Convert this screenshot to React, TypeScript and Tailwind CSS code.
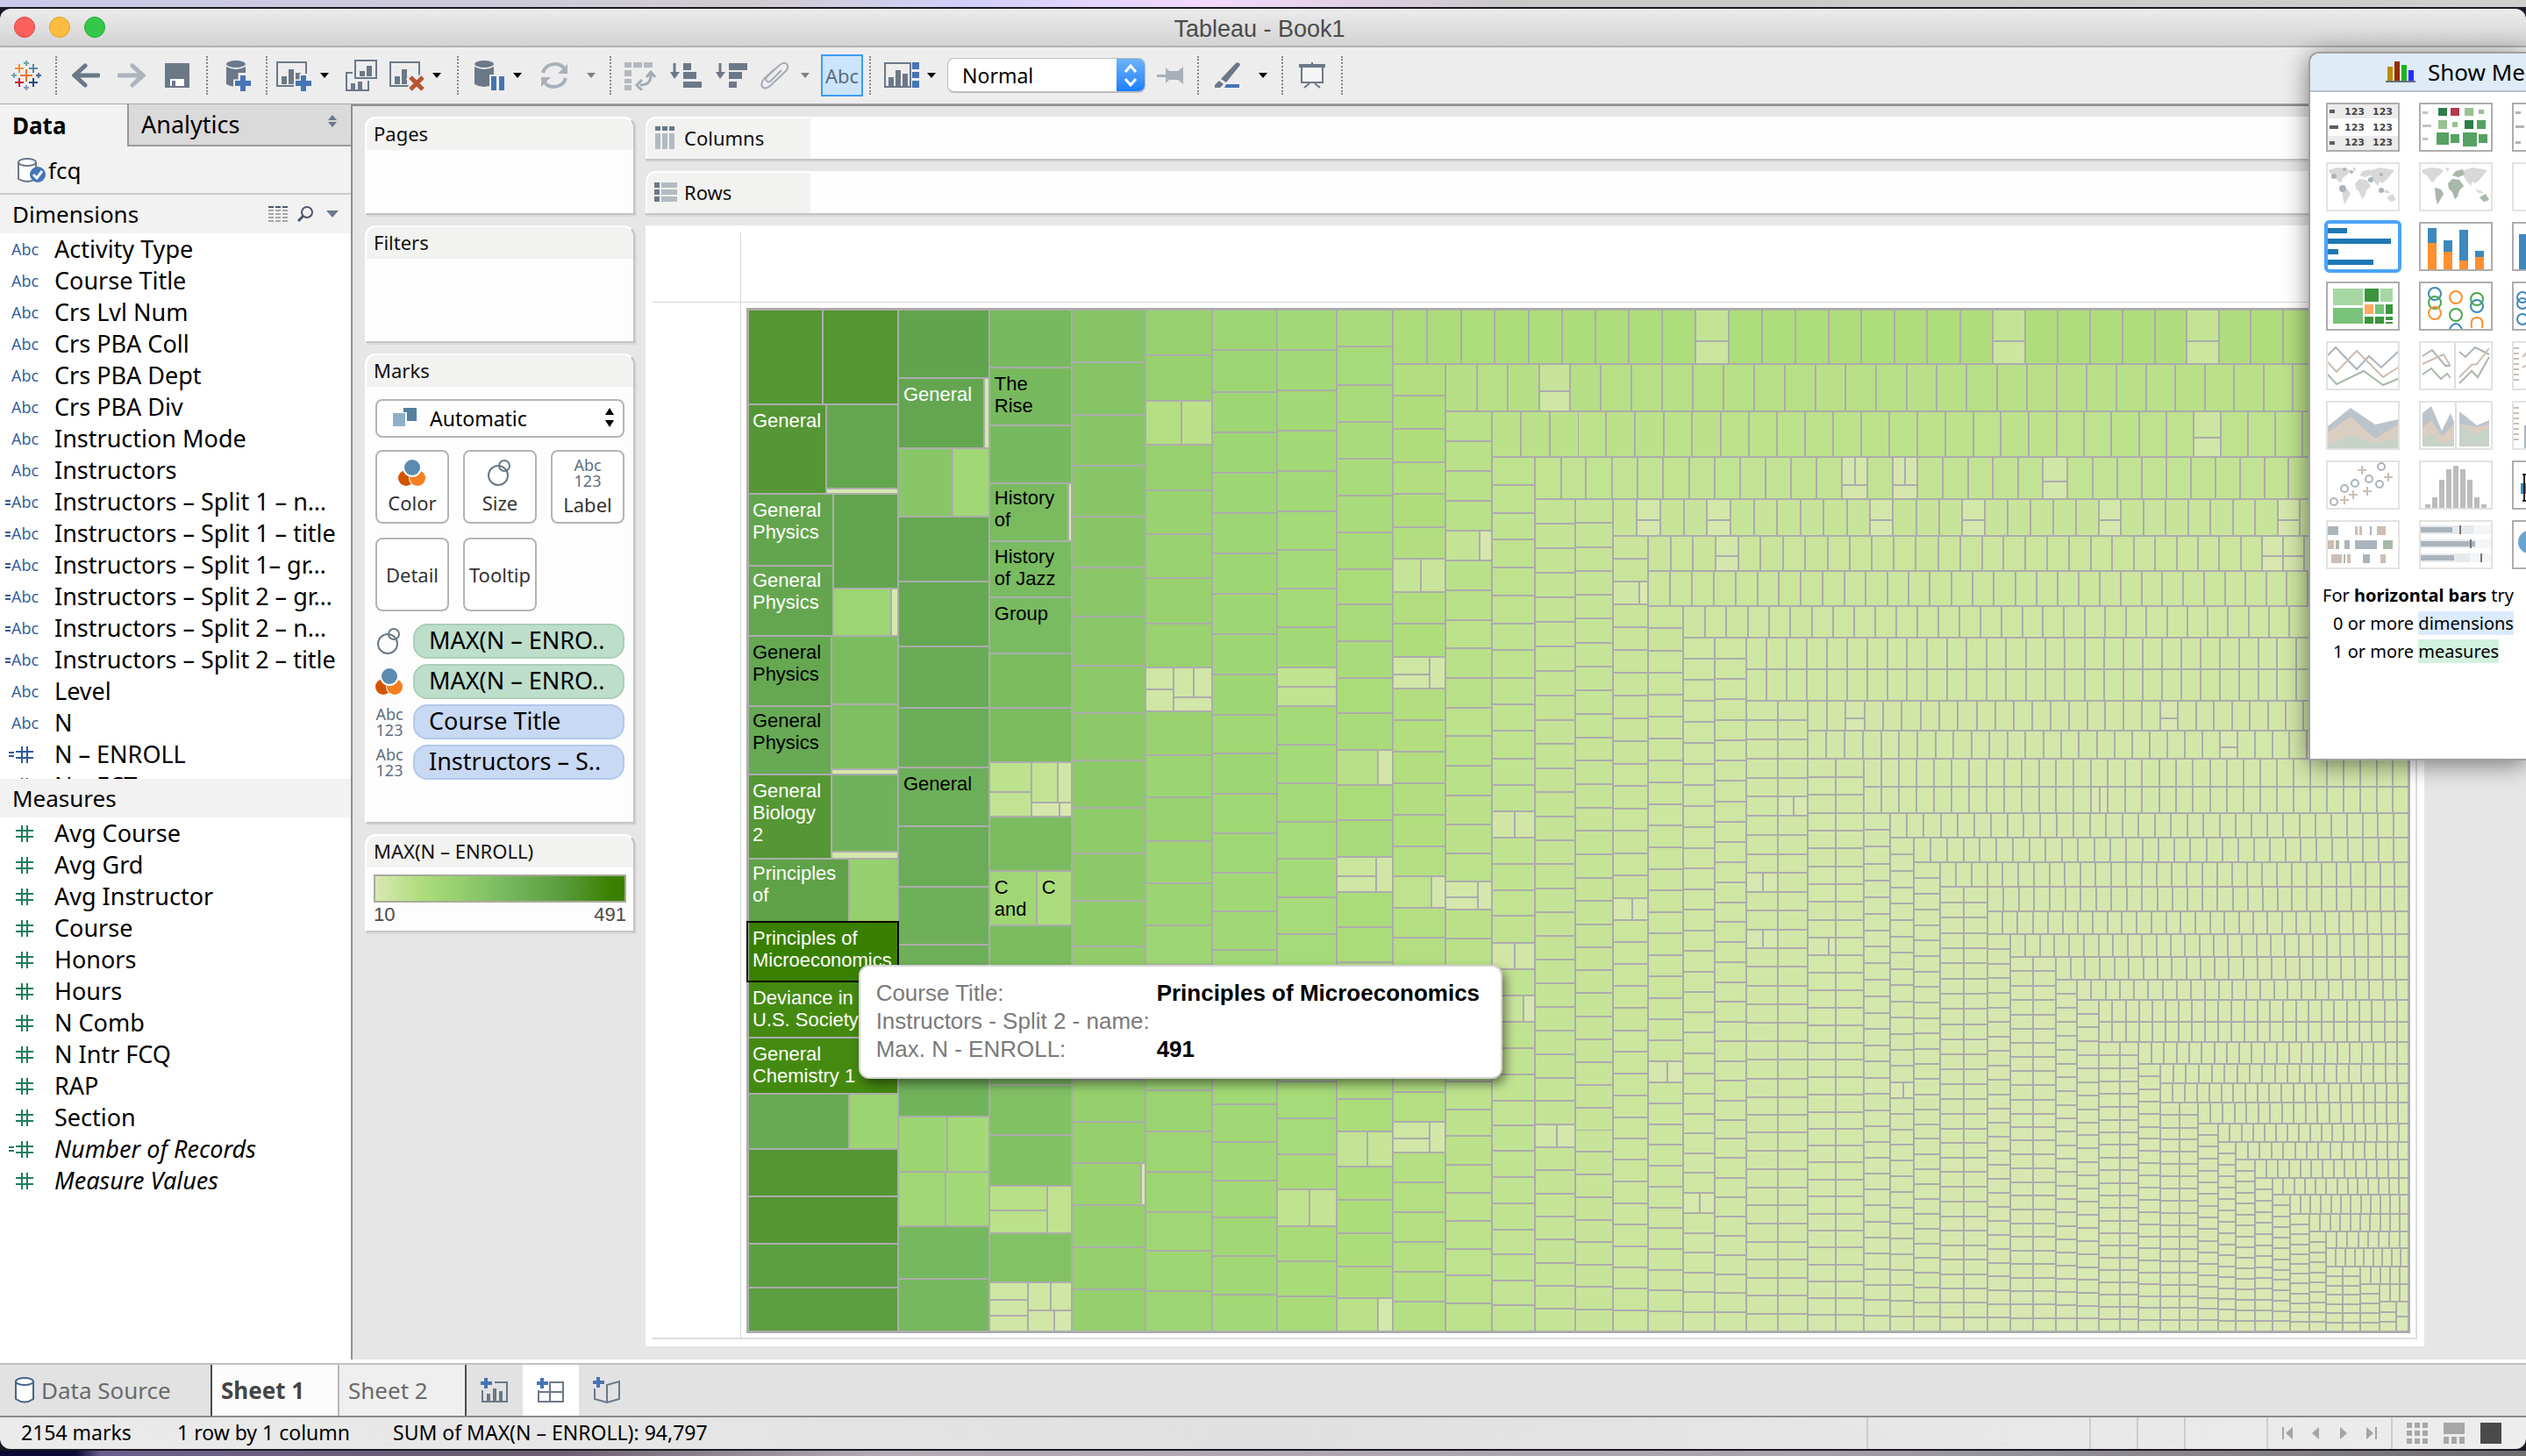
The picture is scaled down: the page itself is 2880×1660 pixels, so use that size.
import React from 'react';

const STEEL = '#6b7888';
const BLUE = '#4674b5';

/* ---------- colour scale ---------- */
const RAMP: [number, string][] = [
  [10, '#dae8b4'],
  [34, '#d0e6a4'],
  [46, '#c8e49a'],
  [69, '#bde28d'],
  [78, '#b8e087'],
  [96, '#afdd7c'],
  [131, '#a3d977'],
  [160, '#9ad26f'],
  [194, '#8cc868'],
  [260, '#77b95f'],
  [297, '#6bad58'],
  [340, '#62a44d'],
  [361, '#5c9f42'],
  [390, '#549632'],
  [462, '#458a10'],
  [491, '#3a8000'],
];

const channel = (hex: string, i: number) => parseInt(hex.slice(1 + i * 2, 3 + i * 2), 16);

function colorFor(value: number): string {
  if (value <= RAMP[0][0]) return RAMP[0][1];
  for (let i = 1; i < RAMP.length; i++) {
    const [v1, c1] = RAMP[i];
    if (value <= v1) {
      const [v0, c0] = RAMP[i - 1];
      const t = (value - v0) / (v1 - v0);
      const mix = [0, 1, 2].map((k) => Math.round(channel(c0, k) + (channel(c1, k) - channel(c0, k)) * t));
      return `rgb(${mix.join(',')})`;
    }
  }
  return RAMP[RAMP.length - 1][1];
}

/* ---------- treemap geometry ---------- */
type Cell = { x: number; y: number; w: number; h: number };
type Split = 'v' | 's' | 'w' | 'h' | 't' | 'q' | 'k';
type Strip = ['c' | 'r', number, number | number[], Record<number, Split>?];

const RIGHT = 2748;
const BOTTOM = 1520;

function divide(c: Cell, kind: Split): Cell[] {
  const { x, y, w, h } = c;
  const r = Math.round;
  if (kind === 'v' || kind === 's' || kind === 'w') {
    const a = kind === 's' ? w - 5 : r(w * (kind === 'v' ? 0.54 : 0.74));
    return [{ x, y, w: a, h }, { x: x + a, y, w: w - a, h }];
  }
  if (kind === 'h') {
    const a = r(h * 0.58);
    return [{ x, y, w, h: a }, { x, y: y + a, w, h: h - a }];
  }
  if (kind === 't') {
    const a = r(w * 0.7);
    const b = r(h * 0.55);
    return [
      { x, y, w: a, h: b },
      { x, y: y + b, w: a, h: h - b },
      { x: x + a, y, w: w - a, h },
    ];
  }
  if (kind === 'k') {
    const a = r(w * 0.5);
    const b = r(h * 0.66);
    return [
      { x, y, w: a, h: b },
      { x: x + a, y, w: w - a, h: b },
      { x, y: y + b, w, h: h - b },
    ];
  }
  const a = r(w * 0.42);
  const b = r(h * 0.5);
  const m = r(w * 0.3);
  const d = r(h * 0.68);
  return [
    { x, y, w: a, h: b },
    { x, y: y + b, w: a, h: h - b },
    { x: x + a, y, w: m, h: d },
    { x: x + a + m, y, w: w - a - m, h: d },
    { x: x + a, y: y + d, w: w - a, h: h - d },
  ];
}

/* Each strip is a column ('c', right edge) or a row ('r', bottom edge) followed by its cell count or its cuts */
const STRIPS: Strip[] = [
  ['c', 1306, [414, 474, 532, 590, 648, 704, 760, 814, 868, 922, 974, 1028, 1080, 1131, 1182, 1232, 1280, 1328, 1376, 1424, 1472], { 18: 's' }],
  ['c', 1382, [406, 458, 508, 560, 610, 660, 712, 762, 812, 862, 910, 960, 1008, 1056, 1101, 1149, 1196, 1244, 1292, 1338, 1384, 1428, 1474], { 2: 'v', 8: 'q' }],
  ['c', 1456, [400, 448, 494, 540, 586, 632, 678, 724, 770, 816, 860, 906, 951, 996, 1040, 1084, 1128, 1172, 1216, 1260, 1304, 1348, 1390, 1434, 1478]],
  ['c', 1524, [400, 446, 492, 538, 584, 628, 672, 716, 762, 784, 806, 850, 894, 938, 980, 1024, 1066, 1108, 1150, 1192, 1234, 1276, 1318, 1358, 1400, 1440, 1480], { 24: 'v' }],
  ['c', 1588, [396, 440, 482, 524, 566, 608, 650, 690, 732, 774, 814, 856, 896, 936, 978, 1018, 1058, 1098, 1137, 1176, 1215, 1254, 1292, 1332, 1370, 1408, 1446, 1482], { 12: 'w', 15: 't', 23: 'v', 28: 'w' }],
  ['r', 416, 31, { 9: 'h', 18: 'h', 24: 'h' }],
  ['c', 1648, [452, 490, 528, 564, 602, 638, 676, 712, 750, 786, 822, 858, 894, 930, 966, 1000, 1036, 1070, 1105, 1140, 1176, 1211, 1246, 1280, 1316, 1350, 1384, 1418, 1452, 1486], { 6: 'v', 9: 't', 16: 'w', 24: 't' }],
  ['r', 470, 32, { 3: 'h' }],
  ['c', 1701, [504, 538, 572, 606, 640, 674, 708, 740, 774, 808, 840, 874, 908, 941, 974, 1006, 1038, 1071, 1104, 1136, 1169, 1201, 1234, 1266, 1297, 1330, 1362, 1394, 1426, 1456, 1488], { 4: 'w', 16: 't' }],
  ['r', 522, 33, { 25: 'h' }],
  ['c', 1750, [554, 586, 616, 648, 680, 712, 742, 774, 804, 834, 866, 896, 926, 956, 986, 1016, 1045, 1076, 1106, 1136, 1166, 1196, 1226, 1256, 1284, 1314, 1344, 1374, 1404, 1432, 1462, 1490], { 13: 'v', 18: 'v', 20: 'w' }],
  ['r', 570, 35, { 12: 'k', 14: 'k', 20: 'h' }],
  ['c', 1796, 35, { 26: 'v' }],
  ['c', 1840, 36],
  ['r', 612, 35, { 1: 'h', 4: 'h', 11: 'h', 15: 'h', 21: 'h', 29: 'h' }],
  ['c', 1880, 36, { 2: 'w', 16: 'v' }],
  ['r', 652, 35, { 3: 'h', 28: 'h', 29: 'h' }],
  ['r', 692, 36],
  ['c', 1920, 34, { 21: 'v' }],
  ['r', 728, 35],
  ['c', 1956, 34, { 27: 'v' }],
  ['c', 1992, 35],
  ['r', 764, 34],
  ['r', 800, 34],
  ['c', 2028, 34, { 9: 'v', 12: 'v' }],
  ['c', 2062, 34, { 5: 'v' }],
  ['r', 834, 33, { 2: 'h', 19: 'h' }],
  ['r', 866, 34, { 23: 'h' }],
  ['c', 2094, 33, { 10: 'w' }],
  ['c', 2126, 33],
  ['r', 898, 32],
  ['r', 928, 32, { 13: 'v' }],
  ['c', 2156, 32],
  ['r', 956, 32],
  ['c', 2183, 31, { 15: 'v' }],
  ['r', 984, 31],
  ['c', 2213, 31],
  ['r', 1012, 31],
  ['c', 2240, 30],
  ['c', 2267, 30],
  ['r', 1040, 28],
  ['r', 1066, 29],
  ['c', 2293, 28],
  ['r', 1092, 28],
  ['c', 2319, 27],
  ['c', 2345, 27],
  ['r', 1118, 25],
  ['c', 2369, 26],
  ['r', 1141, 24],
  ['c', 2394, 25],
  ['r', 1166, 24],
  ['r', 1189, 24],
  ['c', 2418, 23],
  ['c', 2439, 23],
  ['r', 1214, 22],
  ['c', 2464, 22],
  ['r', 1236, 20],
  ['r', 1258, 21],
  ['c', 2486, 19],
  ['c', 2507, 19],
  ['r', 1282, 18],
  ['c', 2530, 18],
  ['r', 1304, 17],
  ['c', 2550, 17],
  ['r', 1324, 15],
  ['c', 2572, 16],
  ['r', 1345, 14],
  ['c', 2592, 14],
  ['r', 1364, 13],
  ['c', 2612, 13],
  ['r', 1386, 12],
  ['c', 2634, 12],
  ['r', 1406, 10],
  ['c', 2653, 10],
  ['r', 1425, 8],
  ['r', 1446, 9],
  ['c', 2672, 7],
  ['c', 2692, 7],
  ['r', 1466, 5],
  ['c', 2714, 5],
  ['r', 1486, 3],
  ['c', 2733, 3],
  ['c', 2748, 2],
];

/* left, top, right, bottom of the cells in the three widest columns */
const HEAD: number[][] = [
  [852, 354, 938, 462], [938, 354, 1024, 462],
  [852, 462, 942, 564], [942, 462, 1024, 558], [942, 558, 1024, 564],
  [852, 564, 950, 646], [852, 646, 950, 726], [950, 564, 1024, 672], [950, 672, 1016, 726], [1016, 672, 1024, 726],
  [852, 726, 948, 806], [852, 806, 948, 884], [948, 726, 1024, 804], [948, 804, 1024, 878], [948, 878, 1024, 884],
  [852, 884, 948, 980], [948, 884, 1024, 972], [948, 972, 1024, 980],
  [852, 980, 968, 1052], [968, 980, 1024, 1052],
  [852, 1052, 1024, 1120], [852, 1120, 1024, 1184], [852, 1184, 1024, 1248],
  [852, 1248, 968, 1312], [968, 1248, 1024, 1312],
  [852, 1312, 1024, 1366], [852, 1366, 1024, 1420], [852, 1420, 1024, 1470], [852, 1470, 1024, 1520],
  [1024, 354, 1128, 432], [1024, 432, 1122, 512], [1122, 432, 1128, 512],
  [1024, 512, 1086, 590], [1086, 512, 1128, 590],
  [1024, 590, 1128, 664], [1024, 664, 1128, 738], [1024, 738, 1128, 808], [1024, 808, 1128, 876],
  [1024, 876, 1128, 943], [1024, 943, 1128, 1012], [1024, 1012, 1128, 1078], [1024, 1078, 1128, 1144],
  [1024, 1144, 1128, 1210], [1024, 1210, 1128, 1274],
  [1024, 1274, 1080, 1338], [1080, 1274, 1128, 1338], [1024, 1338, 1078, 1400], [1078, 1338, 1128, 1400],
  [1024, 1400, 1128, 1460], [1024, 1460, 1128, 1520],
  [1128, 354, 1222, 420], [1128, 420, 1222, 486], [1128, 486, 1222, 552],
  [1128, 552, 1218, 618], [1218, 552, 1222, 618],
  [1128, 618, 1222, 682], [1128, 682, 1222, 746], [1128, 746, 1222, 808], [1128, 808, 1222, 870],
  [1128, 870, 1176, 904], [1128, 904, 1176, 932], [1176, 870, 1206, 916], [1206, 870, 1222, 916],
  [1176, 916, 1208, 932], [1208, 916, 1222, 932],
  [1128, 932, 1222, 994], [1128, 994, 1182, 1056], [1182, 994, 1222, 1056],
  [1128, 1056, 1222, 1118], [1128, 1118, 1222, 1178], [1128, 1178, 1222, 1238], [1128, 1238, 1222, 1296],
  [1128, 1296, 1222, 1354], [1128, 1354, 1194, 1382], [1128, 1382, 1194, 1408], [1194, 1354, 1222, 1408],
  [1128, 1408, 1222, 1464],
  [1128, 1464, 1172, 1484], [1128, 1484, 1172, 1502], [1128, 1502, 1172, 1520],
  [1172, 1464, 1198, 1496], [1198, 1464, 1222, 1496], [1172, 1496, 1202, 1520], [1202, 1496, 1222, 1520],
];

function buildCells(): Cell[] {
  const cells: Cell[] = HEAD.map(([x0, y0, x1, y1]) => ({ x: x0, y: y0, w: x1 - x0, h: y1 - y0 }));
  let x = 1222;
  let y = 354;
  for (const [dir, edge, parts, splits = {}] of STRIPS) {
    const start = dir === 'c' ? y : x;
    const end = dir === 'c' ? BOTTOM : RIGHT;
    let cuts: number[];
    if (typeof parts === 'number') {
      cuts = Array.from({ length: parts + 1 }, (_, i) => {
        const t = i / parts;
        return Math.round(start + (end - start) * (t * 1.04 - t * t * 0.04));
      });
    } else {
      cuts = [start, ...parts, end];
    }
    for (let i = 0; i < cuts.length - 1; i++) {
      const cell: Cell =
        dir === 'c'
          ? { x, y: cuts[i], w: edge - x, h: cuts[i + 1] - cuts[i] }
          : { x: cuts[i], y, w: cuts[i + 1] - cuts[i], h: edge - y };
      const kind = splits[i];
      if (kind) cells.push(...divide(cell, kind));
      else cells.push(cell);
    }
    if (dir === 'c') x = edge;
    else y = edge;
  }
  return cells;
}

const CELLS = buildCells();
const UNIT = 491 / (172 * 68);

const LABELS: [number, number, string, string[]][] = [
  [858, 488, '#fff', ['General']],
  [858, 590, '#fff', ['General', 'Physics']],
  [858, 670, '#fff', ['General', 'Physics']],
  [858, 752, '#000', ['General', 'Physics']],
  [858, 830, '#000', ['General', 'Physics']],
  [858, 910, '#fff', ['General', 'Biology', '2']],
  [858, 1004, '#fff', ['Principles', 'of']],
  [858, 1078, '#fff', ['Principles of', 'Microeconomics']],
  [858, 1146, '#fff', ['Deviance in', 'U.S. Society']],
  [858, 1210, '#fff', ['General', 'Chemistry 1']],
  [1030, 458, '#fff', ['General']],
  [1030, 902, '#000', ['General']],
  [1134, 446, '#000', ['The', 'Rise']],
  [1134, 576, '#000', ['History', 'of']],
  [1134, 643, '#000', ['History', 'of Jazz']],
  [1134, 708, '#000', ['Group']],
  [1134, 1020, '#000', ['C', 'and']],
  [1188, 1020, '#000', ['C']],
];

function Treemap() {
  return (
    <svg viewBox="845 346 1910 1181" className="block h-auto w-full" role="img" aria-label="Treemap of enrollment by course">
      <g stroke="#acacac" strokeWidth="2" shapeRendering="crispEdges">
        {CELLS.map((c, i) => (
          <rect key={i} x={c.x} y={c.y} width={c.w} height={c.h} fill={colorFor(c.w * c.h * UNIT)} />
        ))}
        <rect x="852" y="354" width="1896" height="1166" fill="none" strokeWidth="3" />
        <rect x="852" y="1052" width="172" height="68" fill="none" stroke="#000" />
      </g>
      <g fontFamily="'Liberation Sans', Arial, sans-serif" fontSize="22">
        {LABELS.map(([x, y, fill, lines]) => (
          <text key={`${x}-${y}`} fill={fill}>
            {lines.map((l, k) => (
              <tspan key={k} x={x} y={y + k * 25}>
                {l}
              </tspan>
            ))}
          </text>
        ))}
      </g>
    </svg>
  );
}

/* ---------- small icons ---------- */
function Icon({ w, h, children }: { w: number; h: number; children: React.ReactNode }) {
  return (
    <svg width={w} height={h} viewBox={`0 0 ${w} ${h}`} className="shrink-0" aria-hidden="true" fill="none">
      {children}
    </svg>
  );
}

function Plus({ x, y, r, c, s = 2 }: { x: number; y: number; r: number; c: string; s?: number }) {
  return <path d={`M${x - r} ${y}H${x + r}M${x} ${y - r}V${y + r}`} stroke={c} strokeWidth={s} />;
}

const Logo = () => (
  <Icon w={36} h={36}>
    <Plus x={18} y={18} r={7} c="#e8762d" />
    <Plus x={10} y={10} r={5} c="#ed9033" />
    <Plus x={26} y={10} r={5} c="#5b879b" />
    <Plus x={10} y={26} r={5} c="#c72035" />
    <Plus x={26} y={26} r={5} c="#1f4a80" />
    <Plus x={18} y={4} r={3} c="#74a0ab" />
    <Plus x={18} y={32} r={3} c="#8a97b8" />
    <Plus x={4} y={18} r={3} c="#74a0ab" />
    <Plus x={32} y={18} r={3} c="#5c6692" />
  </Icon>
);

const Arrow = ({ flip = false }: { flip?: boolean }) => (
  <Icon w={32} h={28}>
    {flip ? (
      <path d="M2 14H28M17 3L29 14L17 25" stroke="#adb4bc" strokeWidth="5" strokeLinecap="round" />
    ) : (
      <path d="M30 14H4M15 3L3 14L15 25" stroke={STEEL} strokeWidth="5" strokeLinecap="round" />
    )}
  </Icon>
);

const Save = () => (
  <Icon w={28} h={28}>
    <path d="M0 0H28V28H0Z" fill={STEEL} />
    <path d="M6 18H22V26H12V20H8V26H6Z" fill="#fff" />
  </Icon>
);

const Cylinder = () => (
  <>
    <path d="M0 8Q11 14 22 8V28Q11 34 0 28Z" fill={STEEL} />
    <ellipse cx="11" cy="5" rx="11" ry="4" fill={STEEL} />
  </>
);

const AddData = () => (
  <Icon w={32} h={36}>
    <Cylinder />
    <path d="M18 15V36M8 27H32" stroke="#ededed" strokeWidth="9" />
    <path d="M19 18V36M10 27H28" stroke={BLUE} strokeWidth="6" />
  </Icon>
);

const PauseData = () => (
  <Icon w={34} h={36}>
    <Cylinder />
    <path d="M17 17H34V36H17Z" fill="#ededed" />
    <path d="M19 19H25V35H19ZM28 19H34V35H28Z" fill={BLUE} />
  </Icon>
);

const NewSheet = () => (
  <Icon w={42} h={36}>
    <path d="M1 3H34V30H1Z" stroke={STEEL} strokeWidth="2" />
    <path d="M6 19H12V28H6ZM14 11H20V28H14ZM22 15H28V28H22Z" fill={STEEL} />
    <path d="M31 16V36M20 27H42" stroke="#ededed" strokeWidth="9" />
    <path d="M31 18V36M22 27H40" stroke={BLUE} strokeWidth="6" />
  </Icon>
);

const Duplicate = () => (
  <Icon w={36} h={36}>
    <path d="M8 15H1V35H26V24" stroke={STEEL} strokeWidth="2" />
    <path d="M11 1H35V21H11Z" stroke={STEEL} strokeWidth="2" />
    <path d="M16 13H22V19H16ZM24 7H30V19H24ZM6 27H11V34H6ZM14 25H19V34H14Z" fill={STEEL} />
  </Icon>
);

const ClearSheet = () => (
  <Icon w={40} h={36}>
    <path d="M1 3H34V30H1Z" stroke={STEEL} strokeWidth="2" />
    <path d="M6 19H12V28H6ZM14 11H20V28H14Z" fill={STEEL} />
    <path d="M22 19L39 36M39 19L22 36" stroke="#ededed" strokeWidth="9" />
    <path d="M24 20L38 34M38 20L24 34" stroke="#b85332" strokeWidth="5" />
  </Icon>
);

const Refresh = () => (
  <Icon w={32} h={30}>
    <path d="M3 12C5 5 11 2 17 2C22 2 25 4 27 7M29 18C27 25 21 28 15 28C10 28 7 26 5 23" stroke="#a9b0b9" strokeWidth="4" />
    <path d="M31 2V13H20ZM1 28V17H12Z" fill="#a9b0b9" />
  </Icon>
);

const Swap = () => (
  <Icon w={36} h={34}>
    <path d="M0 2H8V8H0ZM10 2H20V8H10ZM22 2H32V8H22ZM0 11H8V18H0ZM0 21H8V26H0ZM0 28H8V34H0Z" fill="#b3b8be" />
    <path d="M30 15Q31 28 18 28M25 19L30 13L35 19M20 22L14 28L20 34" stroke="#a3abb5" strokeWidth="3" />
  </Icon>
);

const Sort = ({ desc = false }: { desc?: boolean }) => (
  <Icon w={36} h={30}>
    <path d="M5 1V15" stroke={STEEL} strokeWidth="3" />
    <path d="M0 11H11L5 19Z" fill={STEEL} />
    {desc ? (
      <path d="M15 1H36V9H15ZM15 11H30V19H15ZM15 22H24V29H15Z" fill={STEEL} />
    ) : (
      <path d="M15 1H24V9H15ZM15 11H30V19H15ZM15 22H36V29H15Z" fill={STEEL} />
    )}
  </Icon>
);

const Clip = () => (
  <Icon w={34} h={32}>
    <path d="M24 10L12 22Q9 25 7 22Q5 20 8 17L22 4Q27 0 30 3Q33 6 29 11L12 27Q6 33 2 29Q0 25 4 20L17 8" stroke="#a4abb4" strokeWidth="2" />
  </Icon>
);

const Fit = () => (
  <Icon w={40} h={30}>
    <path d="M1 1H30V28H1Z" stroke={STEEL} strokeWidth="2" />
    <path d="M5 17H11V27H5ZM13 9H19V27H13ZM21 13H27V27H21Z" fill={STEEL} />
    <path d="M32 0H40V8H32ZM32 11H40V18H32ZM32 21H40V29H32Z" fill={BLUE} />
  </Icon>
);

const Pin = () => (
  <Icon w={30} h={20}>
    <path d="M0 9H10V1L14 5H24L30 0V20L24 15H14L10 19V12H0Z" fill="#a9b0b8" />
  </Icon>
);

const Pen = () => (
  <Icon w={30} h={30}>
    <path d="M24 1Q28 -1 29 3L13 23L7 19Z" fill={STEEL} />
    <path d="M5 21L10 25L6 29H0V26Z" fill={STEEL} />
    <path d="M13 25H28V29H11Z" fill={BLUE} />
  </Icon>
);

const Present = () => (
  <Icon w={30} h={30}>
    <path d="M15 0V3M3 5V23H27V5M12 24L6 29M18 24L24 29" stroke={STEEL} strokeWidth="2" />
    <path d="M0 2H30V6H0Z" fill={STEEL} />
    <path d="M4 7H26V22H4Z" fill="#f6f6f6" />
  </Icon>
);

const Caret = ({ dim = false }: { dim?: boolean }) => (
  <span className="flex w-5 shrink-0 justify-center">
    <Icon w={10} h={6}>
      <path d="M0 0H10L5 6Z" fill={dim ? '#808080' : '#000'} />
    </Icon>
  </span>
);

const Sep = () => (
  <span className="flex w-2 shrink-0 justify-center">
    <span className="h-11 border-l-2 border-dotted border-[#868686]" />
  </span>
);

function Tool({ label, width, children }: { label: string; width: string; children: React.ReactNode }) {
  return (
    <button type="button" aria-label={label} className={`flex h-12 shrink-0 items-center justify-center ${width}`}>
      {children}
    </button>
  );
}

function Toolbar() {
  return (
    <div className="flex h-16 items-center bg-[#ededed]" role="toolbar">
      <Tool label="Start page" width="w-[60px]"><Logo /></Tool>
      <Sep />
      <Tool label="Undo" width="w-[60px]"><Arrow /></Tool>
      <Tool label="Redo" width="w-11"><Arrow flip /></Tool>
      <Tool label="Save" width="w-[60px]"><Save /></Tool>
      <Sep />
      <Tool label="New data source" width="w-[60px] pl-2"><AddData /></Tool>
      <Sep />
      <Tool label="New worksheet" width="w-[52px] pl-1"><NewSheet /></Tool>
      <Caret />
      <Tool label="Duplicate sheet" width="w-[60px] pl-1"><Duplicate /></Tool>
      <Tool label="Clear sheet" width="w-12"><ClearSheet /></Tool>
      <Caret />
      <span className="w-2.5" />
      <Sep />
      <span className="w-2.5" />
      <Tool label="Pause updates" width="w-11"><PauseData /></Tool>
      <Caret />
      <Tool label="Refresh" width="w-16"><Refresh /></Tool>
      <Caret dim />
      <span className="w-2" />
      <Sep />
      <span className="w-1" />
      <Tool label="Swap rows and columns" width="w-[52px]"><Swap /></Tool>
      <Tool label="Sort ascending" width="w-[52px]"><Sort /></Tool>
      <Tool label="Sort descending" width="w-[52px]"><Sort desc /></Tool>
      <Tool label="Group members" width="w-12"><Clip /></Tool>
      <Caret dim />
      <span className="w-2" />
      <button type="button" aria-pressed="true" className="h-12 w-12 border-2 border-[#3b9cf7] bg-[#cbe5fe] text-[22px] leading-8 text-[#5f6d7e]">
        Abc
      </button>
      <span className="w-1" />
      <Sep />
      <span className="w-2" />
      <Tool label="Show cards" width="w-12"><Fit /></Tool>
      <Caret />
      <span className="w-2" />
      <label className="relative flex h-10 w-[226px] overflow-hidden rounded-lg border border-b-2 border-[#bdbdbd] bg-white">
        <span className="sr-only">Fit</span>
        <select className="h-full w-full appearance-none bg-transparent pl-4 text-[23px] leading-8 text-black">
          <option>Normal</option>
        </select>
        <span className="pointer-events-none absolute inset-y-0 right-0 flex w-8 items-center justify-center bg-gradient-to-b from-[#6cb3fa] to-[#157efb]">
          <Icon w={16} h={26}>
            <path d="M2 9L8 2L14 9M2 17L8 24L14 17" stroke="#fff" strokeWidth="3" />
          </Icon>
        </span>
      </label>
      <Tool label="Fix axes" width="w-14"><Pin /></Tool>
      <Sep />
      <Tool label="Highlight" width="w-[60px]"><Pen /></Tool>
      <Caret />
      <span className="w-2" />
      <Sep />
      <Tool label="Presentation mode" width="w-[60px]"><Present /></Tool>
      <Sep />
    </div>
  );
}

/* ---------- data pane ---------- */
const DIMENSIONS: [string, string][] = [
  ['Abc', 'Activity Type'],
  ['Abc', 'Course Title'],
  ['Abc', 'Crs Lvl Num'],
  ['Abc', 'Crs PBA Coll'],
  ['Abc', 'Crs PBA Dept'],
  ['Abc', 'Crs PBA Div'],
  ['Abc', 'Instruction Mode'],
  ['Abc', 'Instructors'],
  ['=Abc', 'Instructors – Split 1 – n…'],
  ['=Abc', 'Instructors – Split 1 – title'],
  ['=Abc', 'Instructors – Split 1– gr…'],
  ['=Abc', 'Instructors – Split 2 – gr…'],
  ['=Abc', 'Instructors – Split 2 – n…'],
  ['=Abc', 'Instructors – Split 2 – title'],
  ['Abc', 'Level'],
  ['Abc', 'N'],
  ['=#', 'N – ENROLL'],
  ['=#', 'N – FCT'],
];

const MEASURES: [string, string][] = [
  ['#', 'Avg Course'],
  ['#', 'Avg Grd'],
  ['#', 'Avg Instructor'],
  ['#', 'Course'],
  ['#', 'Honors'],
  ['#', 'Hours'],
  ['#', 'N Comb'],
  ['#', 'N Intr FCQ'],
  ['#', 'RAP'],
  ['#', 'Section'],
  ['=#', 'Number of Records'],
  ['#', 'Measure Values'],
];

function FieldIcon({ kind, color }: { kind: string; color: string }) {
  const calc = kind.startsWith('=');
  return (
    <svg width="48" height="24" viewBox="0 0 48 24" className="shrink-0" aria-hidden="true">
      {calc && <path d={kind === '=#' ? 'M10 10H16M10 14H16' : 'M6 11H12M6 15H12'} stroke={color} strokeWidth="2" />}
      {kind.endsWith('#') ? (
        <path d="M18 9H38M18 16H38M25 3V22M31 3V22" stroke={color} strokeWidth="2" />
      ) : (
        <text x="13" y="19" fontSize="18" fill={color} fontFamily="'Open Sans', sans-serif">
          Abc
        </text>
      )}
    </svg>
  );
}

function FieldList({ items, color }: { items: [string, string][]; color: string }) {
  return (
    <ul>
      {items.map(([kind, name], i) => (
        <li key={name} className="flex h-9 items-center">
          <FieldIcon kind={kind} color={color} />
          <span
            className={`pl-3.5 text-[27px] leading-9 whitespace-nowrap ${color === '#1f7d5a' && i > 9 ? 'italic' : ''}`}
          >
            {name}
          </span>
        </li>
      ))}
    </ul>
  );
}

function DataPane() {
  return (
    <aside className="flex w-[400px] shrink-0 flex-col bg-white">
      <div className="flex h-12 bg-[#f2f2f2]">
        <button type="button" className="w-[147px] border-r-2 border-[#9a9a9a] pl-3.5 text-left text-[26px] leading-9 font-bold">
          Data
        </button>
        <button
          type="button"
          className="flex flex-1 items-center justify-between border-b-2 border-[#9a9a9a] bg-[#dadada] pr-4 pl-3.5 text-[27px] leading-9"
        >
          Analytics
          <span className="pb-2">
            <Icon w={10} h={14}>
              <path d="M0 6L5 0L10 6ZM0 8H10L5 14Z" fill={STEEL} />
            </Icon>
          </span>
        </button>
      </div>
      <div className="flex h-[55px] items-center gap-0.5 border-b-2 border-[#cbcbcb] bg-[#f2f2f2] pl-5">
        <Icon w={33} h={28}>
          <path d="M1 5V24Q11 30 21 24V5" fill="#fff" stroke={STEEL} strokeWidth="2" />
          <ellipse cx="11" cy="5" rx="10" ry="4" fill="#fff" stroke={STEEL} strokeWidth="2" />
          <circle cx="23" cy="19" r="9" fill={BLUE} />
          <path d="M18 19L22 23L28 15" stroke="#fff" strokeWidth="3" />
        </Icon>
        <span className="text-[26px] leading-9">fcq</span>
      </div>
      <div className="flex h-11 items-center bg-[#f2f2f2] pr-3.5 pl-3.5">
        <h2 className="flex-1 text-[26px] leading-9">Dimensions</h2>
        <Icon w={24} h={18}>
          <path d="M0 1H24" stroke="#4b5766" strokeWidth="2" strokeDasharray="6 2" />
          <path d="M0 5H24M0 9H24M0 13H24M0 17H24" stroke="#a6a6a6" strokeWidth="2" strokeDasharray="6 2" />
        </Icon>
        <span className="pl-2">
          <Icon w={20} h={18}>
            <circle cx="12" cy="7" r="6" stroke="#4b5766" strokeWidth="2" />
            <path d="M8 11L2 17" stroke="#4b5766" strokeWidth="3" />
          </Icon>
        </span>
        <span className="pl-3.5">
          <Icon w={14} h={8}>
            <path d="M0 0H14L7 8Z" fill={STEEL} />
          </Icon>
        </span>
      </div>
      <div className="h-[622px] overflow-hidden">
        <FieldList items={DIMENSIONS} color="#2f5a9c" />
      </div>
      <h2 className="h-11 bg-[#f2f2f2] pl-3.5 text-[26px] leading-11">Measures</h2>
      <FieldList items={MEASURES} color="#1f7d5a" />
    </aside>
  );
}

/* ---------- cards ---------- */
function Card({ title, body, children }: { title: string; body: string; children?: React.ReactNode }) {
  return (
    <section className="rounded-t-xl border-2 border-t-white border-r-[#c4c4c4] border-b-[#c4c4c4] border-l-white bg-[#fdfdfd] shadow-[2px_2px_0_#dadada]">
      <h3 className="rounded-t-xl bg-[#f2f2f0] pb-0.5 pl-2 text-[22px] leading-[34px] text-[#111]">{title}</h3>
      <div className={body}>{children}</div>
    </section>
  );
}

const ColorIcon = () => (
  <Icon w={32} h={32}>
    <circle cx="9" cy="22" r="9" fill="#d35400" />
    <circle cx="22" cy="22" r="10" fill="#fdfdfd" />
    <circle cx="22" cy="22" r="9" fill="#f57f20" />
    <circle cx="16" cy="10" r="11" fill="#fdfdfd" />
    <circle cx="16" cy="10" r="9" fill="#5c8ab0" />
  </Icon>
);

const SizeIcon = () => (
  <Icon w={32} h={32}>
    <circle cx="14" cy="19" r="11" stroke={STEEL} strokeWidth="2" />
    <circle cx="21" cy="8" r="6" stroke={STEEL} strokeWidth="2" />
  </Icon>
);

const LabelIcon = () => (
  <span className="flex w-8 shrink-0 flex-col items-center text-[18px] leading-[18px] text-[#5f6d7e]">
    <span>Abc</span>
    <span>123</span>
  </span>
);

function MarkButton({ label, icon }: { label: string; icon?: React.ReactNode }) {
  return (
    <button
      type="button"
      className="flex h-[84px] w-[84px] flex-col items-center justify-center gap-1 rounded-lg border-2 border-[#b4b4b4] bg-white text-[22px] leading-7 text-[#333]"
    >
      {icon}
      {label}
    </button>
  );
}

function Pill({ icon, text, tone }: { icon: React.ReactNode; text: string; tone: string }) {
  return (
    <div className="flex items-center justify-between">
      <span className="flex w-8 justify-center">{icon}</span>
      <button
        type="button"
        className={`h-10 w-[241px] rounded-2xl border-2 pb-0.5 pl-4 text-left text-[27px] leading-[34px] whitespace-nowrap text-black ${tone}`}
      >
        {text}
      </button>
    </div>
  );
}

function Cards() {
  const green = 'border-[#a9cfb8] bg-[#bddecb]';
  const blue = 'border-[#b3c8ea] bg-[#c8d9f4]';
  return (
    <div className="flex w-[308px] shrink-0 flex-col gap-3">
      <Card title="Pages" body="h-[72px]" />
      <Card title="Filters" body="h-[94px]" />
      <Card title="Marks" body="flex h-[496px] flex-col gap-3.5 px-2.5 pt-3.5">
        <label className="relative block h-11">
          <span className="sr-only">Mark type</span>
          <select className="h-11 w-full appearance-none rounded-lg border-2 border-[#b4b4b4] bg-white pl-[60px] text-[23px] leading-8 text-black">
            <option>Automatic</option>
          </select>
          <span className="pointer-events-none absolute top-2.5 left-5">
            <Icon w={28} h={22}>
              <path d="M12 0H27V15H12Z" fill="#537f9f" />
              <path d="M0 5H16V22H0Z" fill="#fff" />
              <path d="M0 6H14V21H0Z" fill="#8fb0c9" />
            </Icon>
          </span>
          <span className="pointer-events-none absolute top-2.5 right-3">
            <Icon w={10} h={22}>
              <path d="M0 8L5 0L10 8ZM0 14H10L5 22Z" fill="#000" />
            </Icon>
          </span>
        </label>
        <div className="grid grid-cols-3 justify-between gap-4">
          <MarkButton label="Color" icon={<ColorIcon />} />
          <MarkButton label="Size" icon={<SizeIcon />} />
          <MarkButton label="Label" icon={<LabelIcon />} />
          <MarkButton label="Detail" />
          <MarkButton label="Tooltip" />
        </div>
        <div className="flex flex-col gap-1.5">
          <Pill icon={<SizeIcon />} text="MAX(N – ENRO.." tone={green} />
          <Pill icon={<ColorIcon />} text="MAX(N – ENRO.." tone={green} />
          <Pill icon={<LabelIcon />} text="Course Title" tone={blue} />
          <Pill icon={<LabelIcon />} text="Instructors – S.." tone={blue} />
        </div>
      </Card>
      <Card title="MAX(N – ENROLL)" body="h-[72px] px-2 pt-2">
        <div className="h-8 border-2 border-[#a9a99b] bg-[linear-gradient(to_right,#dae8b4,#afdd7c_18%,#9ad26f_31%,#77b95f_52%,#5c9f42_73%,#3a8000_95%)]" />
        <div className="flex justify-between font-['Liberation_Sans',sans-serif] text-[22px] leading-7 text-[#4a4a4a]">
          <span>10</span>
          <span>491</span>
        </div>
      </Card>
    </div>
  );
}

function Shelf({ title, icon }: { title: string; icon: React.ReactNode }) {
  return (
    <section className="flex h-[50px] rounded-tl-xl border-b-2 border-[#c4c4c4] bg-[#fdfdfd] shadow-[0_2px_0_#dadada]">
      <h3 className="flex w-[188px] items-center gap-2 rounded-tl-xl border-t-2 border-l-2 border-white bg-[#f2f2f0] pb-0.5 pl-2 text-[22px] leading-8 text-[#111]">
        {icon}
        {title}
      </h3>
    </section>
  );
}

function Worksheet() {
  return (
    <div className="flex min-w-0 flex-1 flex-col gap-3">
      <Shelf
        title="Columns"
        icon={
          <Icon w={26} h={26}>
            <path d="M1 0H7V5H1ZM9 0H15V5H9ZM17 0H23V5H17Z" fill={STEEL} />
            <path d="M1 8H7V26H1ZM9 8H15V26H9ZM17 8H23V26H17Z" fill="#b3bac1" />
          </Icon>
        }
      />
      <Shelf
        title="Rows"
        icon={
          <Icon w={26} h={22}>
            <path d="M0 0H6V6H0ZM0 8H6V14H0ZM0 16H6V22H0Z" fill={STEEL} />
            <path d="M8 0H26V6H8ZM8 8H26V14H8ZM8 16H26V22H8Z" fill="#b3bac1" />
          </Icon>
        }
      />
      <div className="mr-[116px] bg-white p-2">
        <div className="grid grid-cols-[101px_minmax(0,1fr)] border-r-2 border-b-2 border-[#dcdcdc]">
          <div className="h-20 border-r border-b border-[#d6d6d6]" />
          <div className="h-20 border-b border-[#d6d6d6]" />
          <div className="border-r border-[#d6d6d6]" />
          <div className="relative">
            <Treemap />
            <div
              role="tooltip"
              className="absolute top-[64%] left-[7%] grid grid-cols-[320px_auto] rounded-xl border-2 border-[#d4d4d4] bg-white pt-3.5 pr-6 pb-4 pl-[18px] font-['Liberation_Sans',sans-serif] text-[26px] leading-8 text-[#7a7a7a] shadow-[4px_6px_12px_rgba(0,0,0,0.45)]"
            >
              <span>Course Title:</span>
              <span className="font-bold text-black">Principles of Microeconomics</span>
              <span>Instructors - Split 2 - name:</span>
              <span />
              <span>Max. N - ENROLL:</span>
              <span className="font-bold text-black">491</span>
            </div>
          </div>
        </div>
      </div>
    </div>
  );
}

/* ---------- show me ---------- */
const G = '#aab4bd';
const T = '#cdbdb2';
const S = '#a9b8aa';

const land =
  'M3 9L12 6L24 7L28 10L23 15L19 18L17 23L14 22L10 16L4 12ZM18 29L25 31L28 36L24 43L21 48L19 40ZM30 6L35 7L32 11ZM33 24L38 19L46 20L51 27L46 32L44 39L41 42L38 34L34 30ZM38 15L42 10L50 8L52 14L45 17ZM51 9L62 6L78 9L74 14L68 21L64 24L61 22L59 27L54 21L51 16ZM64 31L70 32L74 35L68 35ZM69 40L76 36L80 43L74 45Z';

const THUMBS: { name: string; on: boolean; art: React.ReactNode }[] = [
  {
    name: 'Text table',
    on: true,
    art: (
      <>
        <path d="M2 2H82V18H2ZM2 38H82V54H2Z" fill="#ebebeb" />
        <path d="M4 8H10V12H4ZM4 26H14V30H4ZM4 44H10V48H4Z" fill="#5f5f5f" />
        <g fontSize="11" fontWeight="700" fill="#444" fontFamily="'DejaVu Sans', sans-serif">
          {[14, 32, 49].map((y) => (
            <React.Fragment key={y}>
              <text x="21" y={y}>123</text>
              <text x="53" y={y}>123</text>
            </React.Fragment>
          ))}
        </g>
      </>
    ),
  },
  {
    name: 'Heat map',
    on: true,
    art: (
      <>
        <path d="M4 10H10V13H4ZM4 25H14V28H4ZM4 40H10V43H4Z" fill="#c4c4c4" />
        <path d="M22 6H32V15H22ZM52 20H62V30H52Z" fill="#2e7d4a" />
        <path d="M36 6H46V15H36Z" fill="#b03a50" />
        <path d="M52 6H62V15H52ZM68 8H74V13H68ZM22 20H32V30H22ZM38 22H44V28H38Z" fill="#98c090" />
        <path d="M66 20H76V30H66ZM20 34H34V48H20ZM36 36H46V46H36ZM50 34H66V50H50ZM68 36H78V46H68Z" fill="#55a264" />
      </>
    ),
  },
  { name: 'Highlight table', on: true, art: <path d="M4 10H10V13H4ZM4 26H14V29H4ZM4 44H10V47H4Z" fill="#b4b4b4" /> },
  {
    name: 'Symbol map',
    on: false,
    art: (
      <>
        <path d={land} fill="#d8d8d8" />
        <g fill={G}>
          <circle cx="9" cy="16" r="3" /><circle cx="19" cy="30" r="4" /><circle cx="29" cy="11" r="2" />
          <circle cx="51" cy="20" r="3" /><circle cx="63" cy="32" r="3" /><circle cx="63" cy="14" r="2" /><circle cx="21" cy="8" r="2" />
        </g>
      </>
    ),
  },
  {
    name: 'Filled map',
    on: false,
    art: (
      <>
        <path d={land} fill="#d8d8d8" />
        <path d="M18 29L25 31L28 36L24 43L21 48L19 40ZM33 24L38 19L46 20L51 27L46 32L44 39L41 42L38 34L34 30ZM38 15L42 10L50 8L52 14L45 17ZM69 40L76 36L80 43L74 45Z" fill={S} />
      </>
    ),
  },
  { name: 'Pie chart', on: false, art: null },
  { name: 'Horizontal bars', on: true, art: <path d="M2 7H24V13H2ZM2 19H74V25H2ZM2 31H14V37H2ZM2 43H54V49H2Z" fill="#1f77b4" /> },
  {
    name: 'Stacked bars',
    on: true,
    art: (
      <>
        <path d="M10 7H20V24H10ZM28 21H38V34H28ZM46 9H56V44H46ZM64 33H74V40H64Z" fill="#3d88bd" />
        <path d="M10 24H20V54H10ZM28 34H38V54H28ZM46 44H56V54H46ZM64 40H74V54H64Z" fill="#ff9030" />
      </>
    ),
  },
  { name: 'Side-by-side bars', on: true, art: <path d="M8 14H20V54H8Z" fill="#3d88bd" /> },
  {
    name: 'Treemap',
    on: true,
    art: (
      <>
        <path d="M8 8H42V27H8ZM62 8H76V23H62Z" fill="#a6d7a4" />
        <path d="M8 30H42V48H8ZM56 26H66V37H56Z" fill="#78c27a" />
        <path d="M44 8H60V23H44ZM68 26H76V37H68ZM44 40H54V48H44ZM56 40H66V48H56ZM68 40H76V44H68ZM68 46H76V48H68Z" fill="#3b953c" />
        <path d="M44 26H54V37H44Z" fill="#ffac60" />
      </>
    ),
  },
  {
    name: 'Circle views',
    on: true,
    art: (
      <g fill="none" strokeWidth="2">
        <g stroke="#3d88bd"><circle cx="18" cy="14" r="7" /><circle cx="66" cy="28" r="7" /><path d="M35 54Q42 42 49 54" /></g>
        <g stroke="#47a84a"><circle cx="18" cy="24" r="7" /><circle cx="42" cy="38" r="7" /><circle cx="66" cy="20" r="7" /></g>
        <g stroke="#ff9030"><circle cx="18" cy="36" r="7" /><circle cx="42" cy="18" r="7" /><path d="M60 53Q58 41 66 41Q74 41 72 53" /></g>
      </g>
    ),
  },
  {
    name: 'Side-by-side circles',
    on: true,
    art: <g fill="none" stroke="#3d88bd" strokeWidth="2"><circle cx="12" cy="18" r="6" /><circle cx="12" cy="25" r="6" /><circle cx="12" cy="43" r="6" /></g>,
  },
  {
    name: 'Lines',
    on: false,
    art: (
      <g fill="none" strokeWidth="2">
        <path d="M2 16L11 7L35 32L49 17L63 30L82 12" stroke={G} />
        <path d="M2 24L12 35L35 11L65 41L82 30" stroke={T} />
        <path d="M2 38L12 49L43 34L65 50L82 43" stroke={S} />
      </g>
    ),
  },
  {
    name: 'Lines with panes',
    on: false,
    art: (
      <g fill="none" strokeWidth="2">
        <path d="M41 2V54" stroke="#dedede" />
        <path d="M4 17L15 10L30 28L36 28M46 12L53 18L64 7L80 15" stroke={G} />
        <path d="M4 26L28 15L35 27M46 41L60 27L66 26L80 8" stroke={T} />
        <path d="M4 38L14 31L25 43L32 37L36 42M46 48L60 34L67 41L80 18" stroke={S} />
      </g>
    ),
  },
  { name: 'Dual lines', on: false, art: <path d="M2 8H8M2 14H8M2 20H8M2 26H8M2 32H8M2 38H8M2 44H8M12 18L20 10M12 30L20 26" stroke={T} strokeWidth="2" /> },
  {
    name: 'Area',
    on: false,
    art: (
      <>
        <path d="M2 29L28 8L56 27L82 21V54H2Z" fill="#bcc4cb" />
        <path d="M2 36L28 18L56 43L82 27V54H2Z" fill="#dacec3" />
        <path d="M2 51L28 39L56 48L82 43V54H2Z" fill="#c7d2c8" />
      </>
    ),
  },
  {
    name: 'Area with panes',
    on: false,
    art: (
      <>
        <path d="M42 2V54" stroke="#dedede" strokeWidth="2" />
        <path d="M4 14L14 6L26 34L36 14L40 24V52H4ZM46 12L66 28L80 22V52H46Z" fill="#bcc4cb" />
        <path d="M4 30L14 22L26 41L40 26V52H4ZM46 26L66 30L80 27V52H46Z" fill="#dacec3" />
        <path d="M4 44L14 36L26 50L40 44V52H4ZM46 28L66 38L80 30V52H46Z" fill="#c7d2c8" />
      </>
    ),
  },
  { name: 'Dual combination', on: false, art: <><path d="M2 8H8M2 14H8M2 20H8M2 26H8M2 32H8M2 38H8M2 44H8" stroke={T} strokeWidth="2" /><path d="M14 28H22V54H14Z" fill={G} /></> },
  {
    name: 'Scatter plot',
    on: false,
    art: (
      <g fill="none" strokeWidth="2">
        <g stroke={G}>
          <circle cx="9" cy="47" r="4" /><circle cx="21" cy="32" r="4" /><circle cx="33" cy="26" r="4" />
          <circle cx="49" cy="21" r="4" /><circle cx="61" cy="27" r="4" /><circle cx="63" cy="7" r="4" />
        </g>
        <path d="M16 45H26M21 40V50M26 39H36M31 34V44M42 35H52M47 30V40M36 11H46M41 6V16M66 19H76M71 14V24" stroke={T} />
      </g>
    ),
  },
  { name: 'Histogram', on: false, art: <path d="M7 50H13V54H7ZM15 42H21V54H15ZM23 22H29V54H23ZM31 10H37V54H31ZM39 6H45V54H39ZM47 10H53V54H47ZM55 22H61V54H55ZM63 42H69V54H63ZM71 50H77V54H71Z" fill="#bcbcbc" /> },
  { name: 'Box plot', on: true, art: <><path d="M10 26H20V38H10Z" fill="#3d88bd" /><path d="M14 16V46M12 16H20M12 46H20" stroke="#222" strokeWidth="2" /></> },
  {
    name: 'Gantt',
    on: false,
    art: (
      <>
        <path d="M2 7H14V17H2ZM50 7H52V17H50ZM21 23H27V33H21ZM33 23H58V33H33ZM42 39H50V49H42Z" fill={G} />
        <path d="M33 7H36V17H33ZM38 7H41V17H38ZM58 7H68V17H58ZM2 23H9V33H2ZM6 39H18V49H6ZM24 39H28V49H24ZM62 39H68V49H62Z" fill={T} />
        <path d="M11 23H15V33H11ZM65 23H76V33H65ZM20 39H22V49H20Z" fill={S} />
      </>
    ),
  },
  {
    name: 'Bullet graphs',
    on: false,
    art: (
      <>
        <path d="M2 6H82V16H2ZM2 22H82V32H2ZM2 38H82V48H2Z" fill="#f3f5f7" />
        <path d="M2 6H62V16H2ZM2 22H64V32H2ZM2 38H58V48H2Z" fill="#e6eaed" />
        <path d="M2 8H38V14H2ZM2 24H64V30H2ZM2 40H40V46H2Z" fill={G} />
        <path d="M46 6H48V16H46ZM58 22H60V32H58ZM70 38H72V48H70Z" fill="#777" />
      </>
    ),
  },
  { name: 'Packed bubbles', on: true, art: <circle cx="20" cy="25" r="13" fill="#6ba3cf" /> },
];

function ShowMe() {
  return (
    <aside className="absolute top-[59px] right-0 h-[808px] w-[248px] overflow-hidden rounded-tl-xl border-2 border-r-0 border-[#a0a0a0] bg-white shadow-[0_4px_28px_rgba(0,0,0,0.5)]">
      <h2 className="flex h-[44px] items-center gap-3.5 border-b-2 border-[#bcc3ca] bg-[#dfebf6] pl-[86px] text-[26px] leading-9 whitespace-nowrap">
        <Icon w={34} h={24}>
          <path d="M2 6H8V22H2Z" fill="#bd8a00" />
          <path d="M10 0H16V22H10Z" fill="#982c00" />
          <path d="M18 4H24V22H18Z" fill="#1fb31f" />
          <path d="M26 10H32V22H26Z" fill="#2a2aff" />
          <path d="M0 23H34" stroke="#66727f" strokeWidth="2" />
        </Icon>
        Show Me
      </h2>
      <div className="grid w-[314px] grid-cols-3 gap-x-[22px] gap-y-3 pt-3 pl-[18px]">
        {THUMBS.map((t) => (
          <button
            key={t.name}
            type="button"
            aria-label={t.name}
            className={`h-14 w-[84px] bg-white ${
              t.name === 'Horizontal bars'
                ? 'rounded-sm outline-4 -outline-offset-2 outline-[#4ba3fb]'
                : t.on
                  ? 'outline-2 -outline-offset-2 outline-[#adadad]'
                  : 'outline-2 -outline-offset-2 outline-[#e2e2e2]'
            }`}
          >
            <Icon w={84} h={56}>{t.art}</Icon>
          </button>
        ))}
      </div>
      <div className="w-[300px] pt-3.5 pl-3.5 text-[20px] leading-8 whitespace-nowrap text-black">
        <p>
          For <b>horizontal bars</b> try
        </p>
        <p className="pl-3">
          0 or more <span className="bg-[#dbeafc]">dimensions</span>
        </p>
        <p className="pl-3">
          1 or more <span className="bg-[#d2f1df]">measures</span>
        </p>
      </div>
    </aside>
  );
}

/* ---------- bottom bars ---------- */
function SheetTabs() {
  return (
    <nav className="flex h-[62px] items-stretch border-t-2 border-b-2 border-t-[#c0c0c0] border-b-[#8a8a8a] bg-[#e2e2e2] text-[26px] leading-9 text-[#6a6a6a]">
      <button type="button" className="flex w-[242px] items-center gap-2 border-r-2 border-[#4c4c4c] pl-[17px]">
        <Icon w={22} h={30}>
          <path d="M1 5V25Q11 32 21 25V5" fill="#fff" stroke="#47658a" strokeWidth="2" />
          <ellipse cx="11" cy="5" rx="10" ry="4" fill="#fff" stroke="#47658a" strokeWidth="2" />
        </Icon>
        Data Source
      </button>
      <button type="button" aria-current="page" className="w-[145px] border-r-2 border-[#b8b8b8] bg-[#fcfcfc] pl-2.5 text-left font-bold text-[#444]">
        Sheet 1
      </button>
      <button type="button" className="w-[145px] border-r-2 border-[#4c4c4c] bg-[#efefef] pl-2.5 text-left">
        Sheet 2
      </button>
      <button type="button" aria-label="New worksheet" className="flex w-16 items-center justify-center">
        <Icon w={32} h={28}>
          <path d="M2 14V27H30V5H16" stroke={STEEL} strokeWidth="2" />
          <path d="M7 18H11V27H7ZM14 12H18V27H14ZM21 15H25V27H21Z" fill={STEEL} />
          <path d="M6 0V12M0 6H13" stroke={BLUE} strokeWidth="4" />
        </Icon>
      </button>
      <button type="button" aria-label="New dashboard" className="flex w-16 items-center justify-center bg-white">
        <Icon w={32} h={28}>
          <path d="M2 14V27H30V5H15V27M2 16H30" stroke={STEEL} strokeWidth="2" />
          <path d="M6 0V12M0 6H13" stroke={BLUE} strokeWidth="4" />
        </Icon>
      </button>
      <button type="button" aria-label="New story" className="flex w-16 items-center justify-center">
        <Icon w={32} h={30}>
          <path d="M2 13V25L16 29L30 25V5L16 9V29" stroke={STEEL} strokeWidth="2" />
          <path d="M6 0V12M0 6H13" stroke={BLUE} strokeWidth="4" />
        </Icon>
      </button>
    </nav>
  );
}

function NavButton({ label, d }: { label: string; d: string }) {
  return (
    <button type="button" aria-label={label}>
      <Icon w={12} h={14}>
        <path d={d} fill="#a4a4a4" />
      </Icon>
    </button>
  );
}

function StatusBar() {
  return (
    <footer className="flex h-9 items-stretch rounded-b-xl bg-gradient-to-r from-[#ebebeb] via-[#e0e0e0] to-[#ededed] text-[23px] leading-[34px] text-black">
      <span className="w-[178px] pl-6">2154 marks</span>
      <span className="w-[246px] pl-6">1 row by 1 column</span>
      <span className="flex-1 pl-6">SUM of MAX(N – ENROLL): 94,797</span>
      <span className="w-[254px] border-l-2 border-[#cdcdcd]" />
      <span className="w-[54px] border-l-2 border-[#cdcdcd]" />
      <span className="w-[54px] border-l-2 border-[#cdcdcd]" />
      <span className="w-[94px] border-l-2 border-[#cdcdcd]" />
      <span className="flex w-[142px] items-center justify-between border-l-2 border-[#cdcdcd] px-4">
        <NavButton label="First" d="M0 0H2V14H0ZM12 0V14L4 7Z" />
        <NavButton label="Previous" d="M10 0V14L2 7Z" />
        <NavButton label="Next" d="M2 0V14L10 7Z" />
        <NavButton label="Last" d="M10 0H12V14H10ZM0 0V14L8 7Z" />
      </span>
      <span className="flex w-[154px] items-center gap-[18px] border-l-2 border-[#cdcdcd] pl-4">
        <button type="button" aria-label="Sheet sorter">
          <Icon w={24} h={24}>
            <path d="M0 0H6V6H0ZM9 0H15V6H9ZM18 0H24V6H18ZM0 9H6V15H0ZM9 9H15V15H9ZM18 9H24V15H18ZM0 18H6V24H0ZM9 18H15V24H9ZM18 18H24V24H18Z" fill="#a6a6a6" />
          </Icon>
        </button>
        <button type="button" aria-label="Filmstrip">
          <Icon w={24} h={24}>
            <path d="M0 0H24V13H0ZM0 16H6V24H0ZM9 16H15V24H9ZM18 16H24V24H18Z" fill="#a6a6a6" />
          </Icon>
        </button>
        <button type="button" aria-label="Single sheet">
          <Icon w={24} h={24}>
            <path d="M0 0H24V24H0Z" fill="#4a4a4a" />
          </Icon>
        </button>
      </span>
    </footer>
  );
}

export default function App() {
  return (
    <div className="relative flex min-h-screen flex-col overflow-hidden bg-[#1a1822] font-['Noto_Sans','Open_Sans',sans-serif] text-black">
      <div className="h-2 bg-[linear-gradient(to_right,#c9c9ea,#d0cdd0_30%,#cfcffa_38%,#f3d8fb_48%,#c8c8c8_60%,#cfcfcf)]" />
      <header className="mt-0.5 flex h-[44px] items-center rounded-t-xl border-b-2 border-[#b1b1b1] bg-gradient-to-b from-[#ececec] to-[#d3d3d3]">
        <div className="flex flex-1 gap-4 pl-4">
          <button type="button" aria-label="Close" className="h-6 w-6 rounded-full border border-[#e0443e] bg-[#fc605c]" />
          <button type="button" aria-label="Minimize" className="h-6 w-6 rounded-full border border-[#dea123] bg-[#fdbc40]" />
          <button type="button" aria-label="Zoom" className="h-6 w-6 rounded-full border border-[#1aab29] bg-[#34c84a]" />
        </div>
        <h1 className="pt-1 font-['Liberation_Sans',sans-serif] text-[27px] leading-8 text-[#4b4b4b]">Tableau - Book1</h1>
        <div className="flex-1 pr-6" />
      </header>
      <Toolbar />
      <main className="flex flex-1 border-t border-[#a6a6a6] bg-[#e6e6e6]">
        <DataPane />
        <div className="flex min-w-0 flex-1 gap-3 border-t-2 border-l-2 border-[#8f8f8f] pt-3 pl-3.5">
          <Cards />
          <Worksheet />
        </div>
      </main>
      <div className="h-1 bg-white" />
      <SheetTabs />
      <StatusBar />
      <div className="mt-0.5 h-1.5 bg-[linear-gradient(to_right,#0d0a33_3%,#6a5f8c_4%,#6b5f6f_22%,#b5adb5_35%,#a8a3ad_70%,#6f6c6f)]" />
      <ShowMe />
    </div>
  );
}
